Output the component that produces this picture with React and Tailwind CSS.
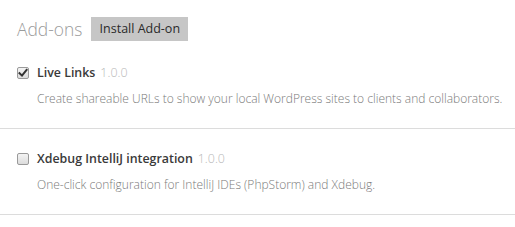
import React from "react";

function Box({ checked }) {
  return (
    <span className="flex h-[12px] w-[12px] shrink-0 items-center justify-center rounded-[2px] border border-[#9a9a9a] bg-gradient-to-b from-[#f4f4f4] to-[#dcdcdc]">
      {checked && (
        <svg width="10" height="10" viewBox="0 0 10 10">
          <path d="M1.5 5.2 L4 7.6 L8.6 1.8" fill="none" stroke="#333" strokeWidth="2" strokeLinecap="square" />
        </svg>
      )}
    </span>
  );
}

function Row({ checked, title, version, desc }) {
  return (
    <div className="border-b border-[#dcdcdc] pt-[20px] pb-[19px]">
      <div className="flex h-[20px] items-center pl-[17px] whitespace-nowrap">
        <Box checked={checked} />
        <span className="ml-[8px] text-[12.4px] font-semibold text-[#3a3a3a]">{title}</span>
        <span className="ml-[5px] text-[12.4px] font-light text-[#b8b8b8]">{version}</span>
      </div>
      <div className="mt-[6px] flex h-[20px] items-center whitespace-nowrap pl-[37px] text-[12px] font-light text-[#7a7a7a]">
        {desc}
      </div>
    </div>
  );
}

export default function App() {
  return (
    <div className="h-[227px] w-[515px] bg-white" style={{ fontFamily: '"Open Sans", "Noto Sans", sans-serif' }}>
      <div className="flex items-center pl-[17px] pt-[17px]">
        <span className="text-[17.4px] font-light text-[#9b9b9b] leading-[24px]">Add-ons</span>
        <span className="ml-[9px] flex h-[24px] w-[97px] items-center justify-center bg-[#c6c6c6] text-[12.5px] text-[#2a2a2a]">
          Install Add-on
        </span>
      </div>
      <div className="mt-[2px]">
        <Row checked title="Live Links" version="1.0.0" desc="Create shareable URLs to show your local WordPress sites to clients and collaborators." />
        <Row title="Xdebug IntelliJ integration" version="1.0.0" desc="One-click configuration for IntelliJ IDEs (PhpStorm) and Xdebug." />
      </div>
    </div>
  );
}
